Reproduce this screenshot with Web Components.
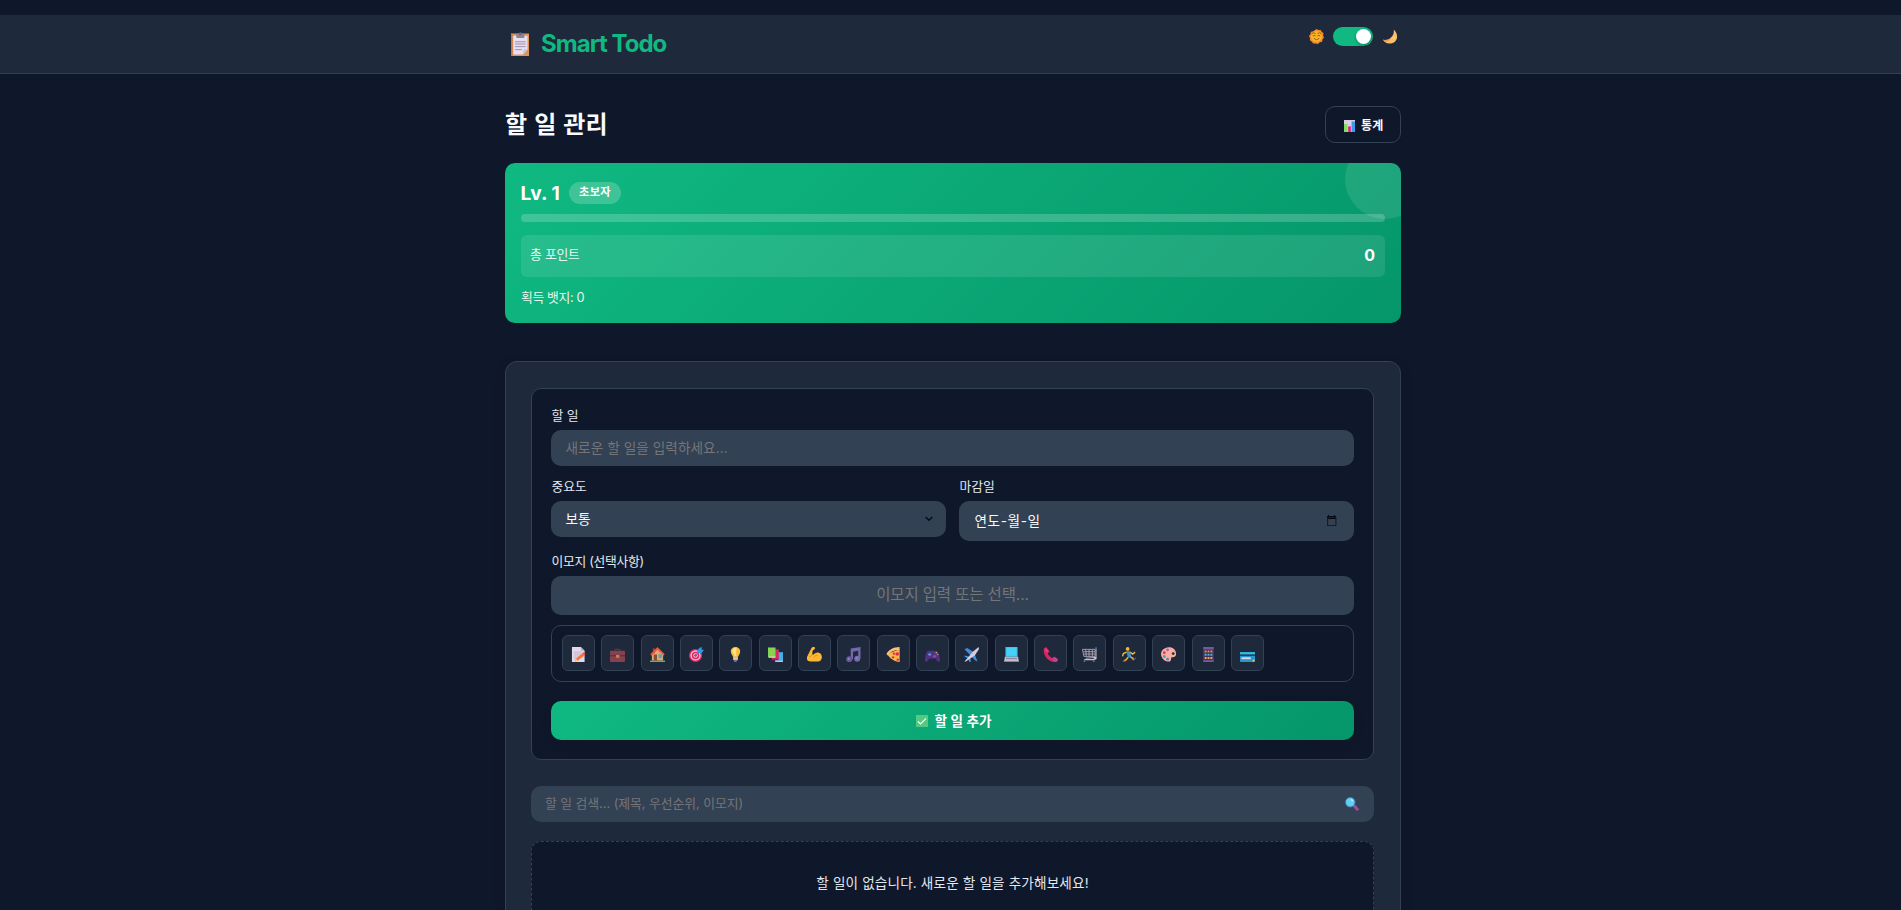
<!DOCTYPE html>
<html lang="ko">
<head>
<meta charset="utf-8">
<title>Smart Todo</title>
<style>
html,body{margin:0;height:910px;overflow:hidden;background:#0f172a}
body{font-family:Inter,"Noto Sans CJK KR",sans-serif;color:#f8fafc}
</style>
</head>
<body>
<todo-app></todo-app>
<script>
const ICONS = {
clipboard:'<path fill="#df9558" d="M4 2h24v30H4z"/><path fill="#c5764b" d="M4 2h2v30H4z"/><path fill="#e8dff0" d="M7 5h19v18l-6 7H7z"/><path fill="#cfc2dc" d="M26 23h-5l-2 7z"/><rect x="11" y="2" width="11" height="6" rx="1.500" fill="#8d8492"/><circle cx="16.500" cy="2.200" r="2" fill="#6d6475"/><path stroke="#9b90a9" stroke-width="1.300" d="M9.500 13h14M9.500 16h14M9.500 19.500h14M9.500 23.500h9"/>',
sun:'<path fill="#f58a2c" d="M16 0l4 2 5 0 2 4 4 3-1 5 2 4-3 4-1 5-5 1-4 4-5-1-5 0-3-4-4-3 0-5-2-4 3-4 1-5 5-1z"/><circle cx="16" cy="16" r="11.500" fill="#fbb528"/><path d="M6 10q4-4 8 0M18 10q4-4 8 0M8 15q3-3 6 0M18 15q3-3 6 0M10 20q6 6 12 0" fill="none" stroke="#85521f" stroke-width="1.800"/>',
moon:'<path fill="#fbbf67" d="M23 1c13 12 7 30-9 30C7 31 3 28 0 23c12 2 25-7 23-22z"/><path fill="#ee9b59" d="M0 23c7 2 13 0 17-4-2 5-8 9-13 8z"/><circle cx="24" cy="19" r="2" fill="#ffdba0"/>',
chart:'<path fill="#d8cbe3" d="M0 0h32v32H0z"/><path stroke="#ede7f1" stroke-width="1.500" d="M0 8h32M0 16h32M0 24h32"/><path fill="#83dc65" d="M0 10h10v22H0z"/><path fill="#d82b73" d="M12 17h8v15h-8z"/><path fill="#3d99ed" d="M22 4h10v28H22z"/>',
memo:'<path fill="#e2d8e9" d="M2 0h19l8 8v24H2z"/><path fill="#bcaec9" d="M21 0v8h8z"/><path stroke="#b6a8c2" stroke-width="1.500" d="M6 11h16M6 15h14M6 19h10M6 23h5"/><path fill="#f9753e" d="M10 25L25 12l5 5-15 12-6 2z"/><path fill="#dc4c53" d="M25 12l3-1 3 4-2 3z"/><path fill="#f9c59b" d="M10 25l5 4-6 2z"/>',
briefcase:'<path d="M11 8V5h10v3" fill="none" stroke="#653342" stroke-width="2.500"/><rect y="8" width="32" height="24" rx="2" fill="#84424f"/><path fill="#62333f" d="M0 17h32v3H0z"/><path fill="#d57d52" d="M13 17h7v6h-7z"/>',
house:'<path fill="#43c56b" d="M0 29h32v3H0z"/><path fill="#e8a867" d="M4 14L16 3l12 11v15H4z"/><path fill="#a74731" d="M6 3h5v8l-5 5z"/><path d="M2 17L16 3l14 14" fill="none" stroke="#e75a43" stroke-width="4"/><path fill="#80503e" d="M8 16h7v13H8z"/><path fill="#35a7e9" stroke="#e8a867" d="M18 15h8v9h-8z"/>',
target:'<circle cx="14" cy="18" r="14" fill="#db2965"/><circle cx="14" cy="18" r="9.500" fill="none" stroke="#f7bed3" stroke-width="3"/><circle cx="14" cy="18" r="4" fill="none" stroke="#ffd0df" stroke-width="2"/><path stroke="#8c6da0" stroke-width="2.500" d="M14 18L24 9"/><path fill="#2b9be8" d="M17 9l5-7 5-2v6h5l-5 7-7 1z"/>',
bulb:'<path fill="#f9bd3d" d="M6 10C6-3 26-3 26 10c0 6-5 8-5 13H11C11 18 6 16 6 10z"/><path fill="#ffe58a" d="M9 8c1-6 7-7 10-4-2 2-2 8-1 15h-4C13 14 9 12 9 8z"/><path fill="#d7c9dd" d="M11 22h10v6H11z"/><path fill="#836f91" d="M12 27h8l-2 5h-4z"/>',
books:'<path fill="#46aee3" d="M15 11h17v21H15z"/><path fill="#c9baf1" d="M16 29h16v3H16z"/><path fill="#d62961" d="M8 5h15v23H8z"/><path fill="#842e4d" d="M8 25h13v3H8z"/><path fill="#87d453" d="M0 1h16v20H0z"/><path fill="#d5e7c5" d="M1 20h15v3H1z"/>',
arm:'<path fill="#fcb832" d="M9 3c2-4 9-4 8 0-1 3-4 3-5 5l-1 8c4 1 5-4 10-4 14-1 14 19 2 19H8C0 31-2 26 1 19z"/><path d="M10 17c-1 4-5 4-6 2M15 22c2-4 5-5 8-3" fill="none" stroke="#e4892d" stroke-width="2"/>',
music:'<path fill="#7467aa" d="M10 3L31 0v7L15 10v16h-5zM26 6h5v18h-5z"/><circle cx="7" cy="26" r="6.500" fill="#6457a1"/><circle cx="24" cy="25" r="6.500" fill="#7569ad"/><circle cx="6" cy="25" r="2.500" fill="#8d80b7"/><circle cx="23" cy="24" r="2.500" fill="#8d80b7"/>',
pizza:'<path fill="#fbb748" d="M2 15L29 5v27C18 32 8 24 2 15z"/><path fill="#ffbe77" d="M1 15C5 6 16 0 29 0v6C18 7 9 10 4 18z"/><g fill="#d82d57"><circle cx="17" cy="14" r="2.500"/><circle cx="24" cy="15" r="3.800"/><circle cx="15" cy="22" r="2.500"/><circle cx="25" cy="27" r="2.500"/></g>',
game:'<path fill="#523083" d="M7 8h18c4 0 7 13 7 20 0 7-6 3-9-3H9C6 31 0 35 0 28 0 21 3 8 7 8z"/><circle cx="10" cy="16" r="3.500" fill="#7e5dac"/><circle cx="20" cy="20" r="3" fill="#7456a4"/><path fill="#4f99d0" d="M7 15h6v2H7z"/><circle cx="24" cy="12" r="1.600" fill="#f4bf3b"/><circle cx="27" cy="16" r="1.600" fill="#48c97b"/><circle cx="23" cy="19" r="1.600" fill="#df346a"/>',
plane:'<path fill="#4588d9" d="M1 5l6-3 14 9 8 20-5-2L14 18z"/><path fill="#3c9ce9" d="M2 18l10 3 3 10-3 1-4-8-7-4z"/><path fill="#d8cade" d="M1 31L20 9 31 0l1 4-9 14L4 31z"/>',
laptop:'<path fill="#39b7e5" d="M3 0h26v21H3z"/><path fill="#45d0f8" d="M5 1h22v18H5z"/><path fill="#c6bed0" d="M2 21h28l2 11H0z"/><path fill="#8e859f" d="M4 23h24v3H4z"/><path fill="#857b98" d="M0 30h32v2H0z"/>',
phone:'<path fill="#d82564" d="M2 3l5-3 7 9-4 5c2 4 6 8 10 10l4-3 8 5-3 6C14 34-2 18 2 3z"/><path fill="#b7459e" d="M20 24l4-3 8 5-3 6c-4 1-8-3-9-8z"/><path stroke="#f26289" stroke-width="2" d="M5 4l5 7"/>',
cart:'<path fill="none" stroke="#b5acbd" stroke-width="1.800" d="M1 5h27v15H4zM3 10h25M4 15h24M8 5l1 15M15 5v15M22 5v15"/><path fill="none" stroke="#a69dad" stroke-width="2.500" d="M30 3v19L8 24"/><path stroke="#2e6ba9" stroke-width="3" d="M28 2h4"/><path stroke="#cfc6d5" stroke-width="2.500" d="M5 27h22"/><circle cx="5" cy="30" r="2" fill="#3289c8"/><circle cx="25" cy="30" r="2" fill="#3289c8"/><circle cx="28" cy="24" r="3" fill="#c7bcce"/>',
runner:'<circle cx="12" cy="4" r="4" fill="#f7b533"/><path fill="none" stroke="#fbb535" stroke-width="3" d="M10 11l-7 3-2 6M17 11l6 4 5-4"/><path fill="#3791d5" d="M9 9h8l3 12-7 2z"/><path fill="none" stroke="#f4ae34" stroke-width="3.500" d="M13 22l-4 5-5 3M18 21l5 3 2 4"/><path stroke="#584980" stroke-width="3" d="M1 31h7M25 27l5-4"/>',
palette:'<path fill="#f8ae9b" d="M2 8C10-3 29-2 32 12c2 9-6 10-9 10-3 1 0 7-4 9C5 33-4 18 2 8z"/><circle cx="14" cy="6" r="3" fill="#b454dd"/><circle cx="7" cy="12" r="3" fill="#df3467"/><circle cx="7" cy="20" r="2.800" fill="#27aaa9"/><circle cx="14" cy="26" r="3" fill="#3591e1"/><circle cx="26" cy="14" r="3" fill="#242c40"/>',
abacus:'<path fill="#593a83" d="M5 0h22v32H5z"/><path fill="#7458a0" d="M5 0h22v5H5zM5 28h22v4H5z"/><path fill="#392d5b" d="M8 6h16v21H8z"/><g stroke-width="4" stroke-dasharray="4 2"><path stroke="#f28c35" d="M8 9.500h16"/><path stroke="#43b8df" d="M8 16.500h16"/><path stroke="#f5ad3b" d="M8 23.500h16"/></g>',
card:'<rect y="11" width="32" height="21" rx="1.500" fill="#2796cf"/><path fill="#31bfdf" d="M0 11h32v4H0z"/><path fill="#273c51" d="M0 16h32v3H0z"/><path fill="#d8dae5" d="M3 22h20v4H3z"/><path fill="#f5c244" d="M27 27h4v4h-4z"/>',
check:'<path fill="#55c982" d="M0 0h32v32H0z"/><path d="M5 17l7 7L27 9" fill="none" stroke="#fff" stroke-width="3"/>',
search:'<path stroke="#97518f" stroke-width="7" stroke-linecap="round" d="M22 21l6 7"/><circle cx="12" cy="12" r="11" fill="#60cff1" stroke="#406dac" stroke-width="2"/><path fill="#bceeff" d="M15 4l4 4-2 2-4-3z"/>'
};
const define = (name, html) => customElements.define(name, class extends HTMLElement {
  constructor(){ super(); this.attachShadow({mode:'open'}).innerHTML = html; }
});
customElements.define('emoji-icon', class extends HTMLElement {
  constructor(){ super(); this.attachShadow({mode:'open'}); }
  connectedCallback(){
    this.shadowRoot.innerHTML = `<style>:host{display:block;flex:none;width:15px;height:15px}svg{display:block;width:100%;height:100%}</style><svg viewBox="0 0 32 32" preserveAspectRatio="none" aria-hidden="true">${ICONS[this.getAttribute('name')]}</svg>`;
  }
});
define('app-header', `<style>
:host{display:block;box-sizing:border-box;height:59px;background:#1e293b;border-bottom:1px solid #334155}
.in{width:896px;margin-left:505px;display:flex;justify-content:space-between;align-items:flex-start}
.brand{display:flex;align-items:center;padding:13px 0 0 3px;gap:9px}
.brand emoji-icon{width:24px;height:24px}
.name{font-size:24px;line-height:32px;font-weight:700;color:#10b981;letter-spacing:-.960px}
.theme{display:flex;align-items:center;padding:12px 3px 0 0;height:19px}
.theme emoji-icon{width:15px;height:15px}
.sw{box-sizing:border-box;width:40px;height:19px;border-radius:10px;background:#10b981;margin:0 10px 0 9px;padding:2px;display:flex;justify-content:flex-end}
.sw i{width:15px;height:15px;border-radius:50%;background:#fff;box-shadow:0 1px 3px #0005}
</style><div class="in"><div class="brand"><emoji-icon name="clipboard"></emoji-icon><span class="name">Smart Todo</span></div>
<div class="theme"><emoji-icon name="sun"></emoji-icon><span class="sw"><i></i></span><emoji-icon name="moon"></emoji-icon></div></div>`);
define('page-title', `<style>
:host{display:flex;justify-content:space-between;height:37px;margin-top:32px}
.t{font-size:24px;line-height:38px;font-weight:700;color:#f8fafc;letter-spacing:.200px;word-spacing:1px}
.b{box-sizing:border-box;width:76px;height:37px;border:1px solid #334155;border-radius:10px;display:flex;align-items:center;padding:2px 0 0 18px;gap:6px;font-size:12px;line-height:18px;font-weight:700;letter-spacing:.2px}
.b emoji-icon{width:11px;height:12px}
</style><span class="t">할 일 관리</span><div class="b"><emoji-icon name="chart"></emoji-icon><span>통계</span></div>`);
define('level-card', `<style>
:host{display:block;box-sizing:border-box;position:relative;overflow:hidden;height:160px;margin-top:20px;padding:19px 16px 0;border-radius:10px;background:linear-gradient(135deg,#10b981,#059669);color:#fff}
:host::before{content:"";position:absolute;right:-24px;top:-24px;width:80px;height:80px;border-radius:50%;background:#ffffff1a}
.lv{display:flex;align-items:center;height:22px;gap:9px}
.n{font-size:19.2px;font-weight:700;line-height:22px;margin-left:-.500px;letter-spacing:.1px}
.rank{box-sizing:border-box;width:52px;height:22px;border-radius:11px;background:#fff3;font-size:11.2px;line-height:20px;font-weight:600;letter-spacing:.3px;text-align:center}
.bar{height:8px;border-radius:4px;background:#fff3;margin-top:10px}
.pts{display:flex;justify-content:space-between;align-items:center;box-sizing:border-box;height:42px;margin-top:13px;padding:0 10px 0 9px;border-radius:6px;background:#ffffff1a}
.k{font-size:12.8px;line-height:18px;opacity:.9;margin-bottom:3px;letter-spacing:-.2px}
.v{font-size:16px;line-height:20px;font-weight:700;margin-bottom:2px}
.bd{font-size:12.8px;line-height:20px;opacity:.9;margin-top:11px;letter-spacing:-.35px}
</style><div class="lv"><span class="n">Lv. 1</span><span class="rank">초보자</span></div><div class="bar"></div>
<div class="pts"><span class="k">총 포인트</span><span class="v">0</span></div><div class="bd">획득 뱃지: 0</div>`);
define('form-field', `<style>
:host{display:block;min-width:0}
.l{height:20px;line-height:22px;font-size:12.8px;color:#e2e8f0;margin-bottom:5px;padding-left:.5px;letter-spacing:var(--ll,0)}
.c{box-sizing:border-box;height:var(--h,36px);border-radius:10px;background:#334155;display:flex;align-items:center;justify-content:var(--j,space-between);padding:0 var(--pr,13px) var(--pb,0) var(--pl,14.500px);font-size:var(--fs,13.6px);line-height:20px;color:var(--c,#757575);letter-spacing:var(--ls,.08px)}
</style><div class="l"><slot name="label"></slot></div><div class="c"><slot></slot></div>`);
define('emoji-picker', `<style>
:host{display:flex;box-sizing:border-box;height:57px;margin-top:10px;border:1px solid #334155;border-radius:10px;padding:9px 10px;gap:6.35px}
.b{box-sizing:border-box;width:33px;height:36px;display:flex;align-items:center;justify-content:center;padding-top:3px;background:#1e293b;border:1px solid #334155;border-radius:6px}
</style>` + 'memo briefcase house target bulb books arm music pizza game plane laptop phone cart runner palette abacus card'.split(' ').map(n=>`<span class="b"><emoji-icon name="${n}"></emoji-icon></span>`).join(''));
define('todo-form', `<style>
:host{display:block;box-sizing:border-box;height:372px;padding:16px 19px 0;border:1px solid #334155;border-radius:10px;background:#0f172a}
.row{display:grid;grid-template-columns:395px 395px;gap:13px;margin:10px 0 10px}
.w{--c:#f8fafc}
.date{--h:40px;--pr:10px;--pl:15.500px;--ls:.600px}
.emoji{--h:39px;--fs:15.500px;--j:center;--ls:-.150px;--pb:2px;--pl:13px;--ll:-.300px}
svg{display:block;flex:none}
.add{height:39px;margin-top:19px;border-radius:10px;background:linear-gradient(135deg,#10b981,#059669);box-shadow:0 4px 12px #0001;display:flex;align-items:center;justify-content:center;padding-left:2px;gap:7px;color:#fff;font-size:13.6px;font-weight:600;line-height:20px}
.add emoji-icon{width:12px;height:12px}
</style>
<form-field><span slot="label">할 일</span><span>새로운 할 일을 입력하세요...</span></form-field>
<div class="row">
<form-field class="w"><span slot="label">중요도</span><span>보통</span><svg width="8" height="6" viewBox="0 0 8 6"><path d="M.7 1L4 4.300 7.300 1" fill="none" stroke="#080c12" stroke-width="1.500"/></svg></form-field>
<form-field class="w date"><span slot="label">마감일</span><span>연도-월-일</span><svg width="18" height="12" viewBox="0 0 18 12"><path fill="#080c12" d="M1 1h1V0h1v1h5V0h1v1h1v3H1z"/><path d="M1.600 2.500h8.300v8H1.600z" fill="none" stroke="#151b24" stroke-width="1.100"/></svg></form-field>
</div>
<form-field class="emoji"><span slot="label">이모지 (선택사항)</span><span>이모지 입력 또는 선택...</span></form-field>
<emoji-picker></emoji-picker>
<div class="add"><emoji-icon name="check"></emoji-icon><span>할 일 추가</span></div>`);
define('search-box', `<style>
:host{box-sizing:border-box;height:36px;margin-top:26px;border-radius:10px;background:#334155;display:flex;align-items:center;justify-content:space-between;padding:0 15px 0 14px;font-size:12.8px;line-height:20px;color:#757575;letter-spacing:-.030px}
emoji-icon{width:14px;height:14px}
</style><span>할 일 검색... (제목, 우선순위, 이모지)</span><emoji-icon name="search"></emoji-icon>`);
define('empty-list', `<style>
:host{display:block;box-sizing:border-box;height:110px;margin-top:19px;border:1px dashed #334155;border-radius:10px;background:#0f172a;padding-top:31px;text-align:center;font-size:13.6px;line-height:20px;color:#e2e8f0;letter-spacing:.150px}
</style><slot></slot>`);
define('todo-panel', `<style>
:host{display:block;box-sizing:border-box;height:620px;margin-top:38px;padding:26px 26px 0 25px;border:1px solid #334155;border-radius:12px;background:#1e293b;box-shadow:0 4px 12px #0002}
</style><slot></slot>`);
define('todo-app', `<style>
:host{display:block;box-sizing:border-box;height:910px;padding-top:15px;overflow:hidden}
main{width:896px;margin-left:505px}
</style><app-header></app-header><main><page-title></page-title><level-card></level-card>
<todo-panel><todo-form></todo-form><search-box></search-box><empty-list>할 일이 없습니다. 새로운 할 일을 추가해보세요!</empty-list></todo-panel></main>`);
</script>
</body>
</html>
